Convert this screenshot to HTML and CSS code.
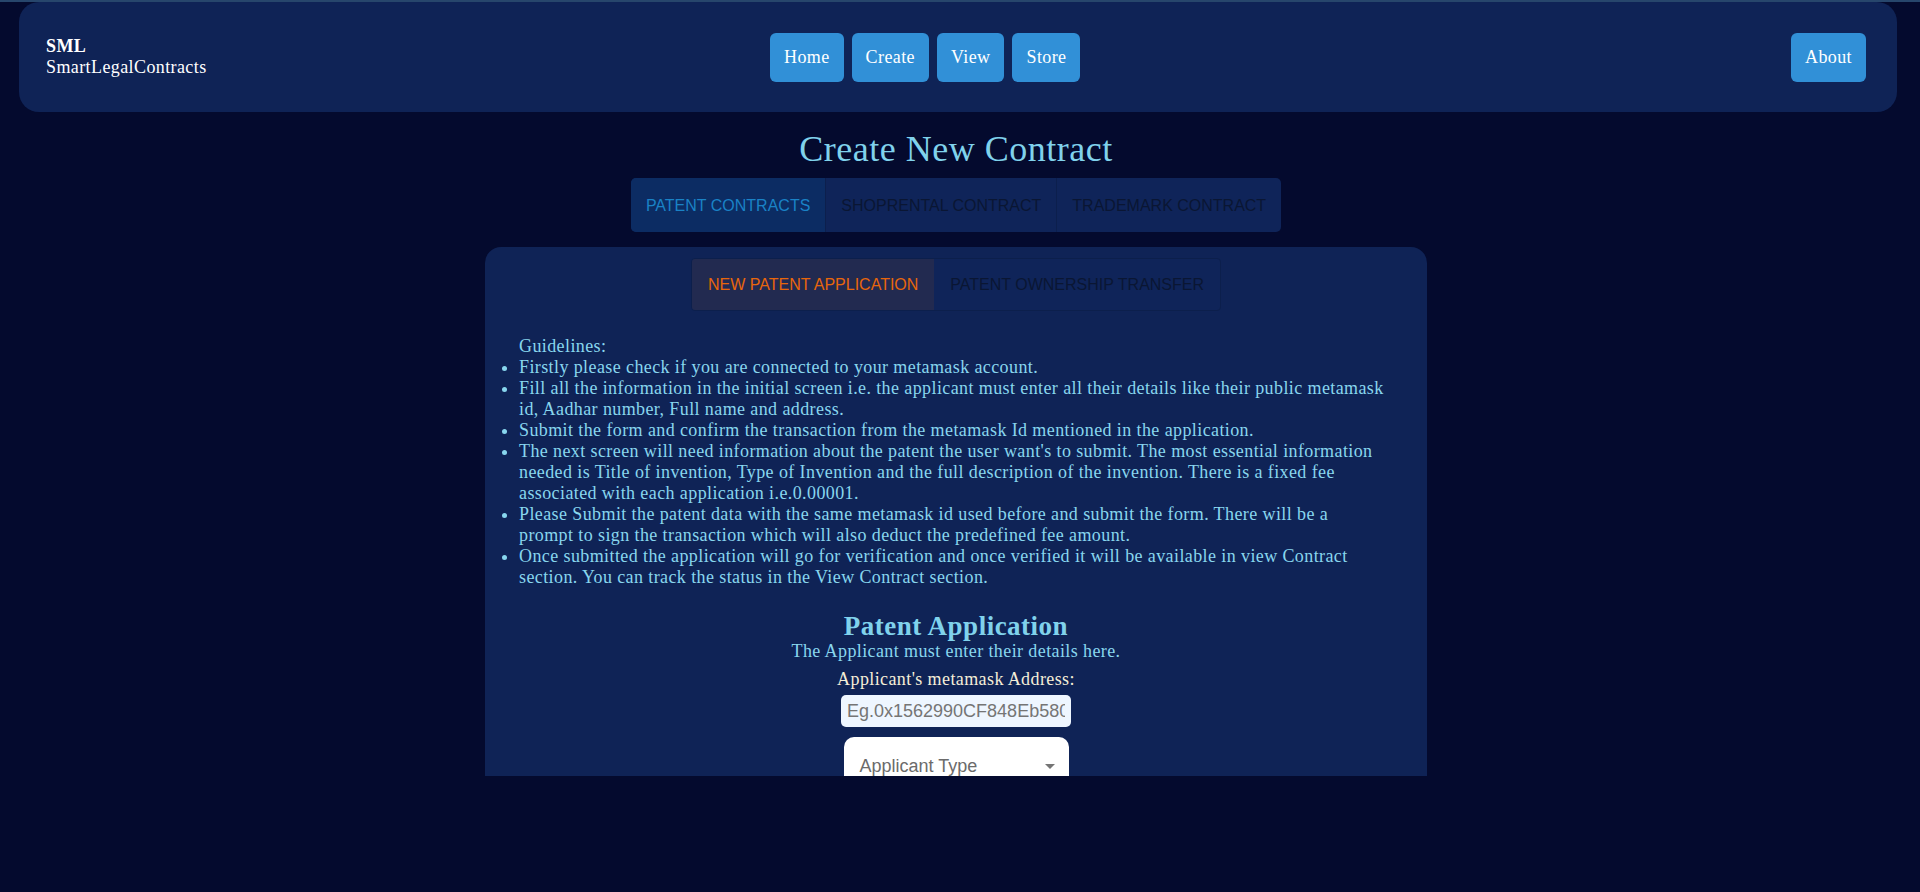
FILE: index.html
```html
<!DOCTYPE html>
<html lang="en">
<head>
<meta charset="utf-8">
<title>SmartLegalContracts - Create</title>
<link rel="stylesheet" href="styles.css">
</head>
<body>
<header class="navbar">
  <div class="brand"><b>SML</b><span>SmartLegalContracts</span></div>
  <nav class="nav-links">
    <a class="btn">Home</a>
    <a class="btn">Create</a>
    <a class="btn">View</a>
    <a class="btn">Store</a>
  </nav>
  <div class="spacer"></div>
  <a class="btn">About</a>
</header>
<main class="main">
  <h1 class="title">Create New Contract</h1>
  <div class="tabs">
    <div class="tab active">Patent Contracts</div>
    <div class="tab">Shoprental Contract</div>
    <div class="tab">Trademark Contract</div>
  </div>
  <section class="card">
    <div class="subtabs">
      <div class="subtab active">New Patent Application</div>
      <div class="subtab">Patent Ownership Transfer</div>
    </div>
    <div class="guidelines">
      <p class="gl-title">Guidelines:</p>
      <ul class="gl-list">
        <li>Firstly please check if you are connected to your metamask account.</li>
        <li>Fill all the information in the initial screen i.e. the applicant must enter all their details like their public metamask id, Aadhar number, Full name and address.</li>
        <li>Submit the form and confirm the transaction from the metamask Id mentioned in the application.</li>
        <li>The next screen will need information about the patent the user want's to submit. The most essential information needed is Title of invention, Type of Invention and the full description of the invention. There is a fixed fee associated with each application i.e.0.00001.</li>
        <li>Please Submit the patent data with the same metamask id used before and submit the form. There will be a prompt to sign the transaction which will also deduct the predefined fee amount.</li>
        <li>Once submitted the application will go for verification and once verified it will be available in view Contract section. You can track the status in the View Contract section.</li>
      </ul>
    </div>
    <form class="form">
      <h2 class="form-title">Patent Application</h2>
      <p class="form-sub">The Applicant must enter their details here.</p>
      <label class="form-label" for="addr">Applicant's metamask Address:</label>
      <input id="addr" class="form-input" type="text" placeholder="Eg.0x1562990CF848Eb580000000000000">
      <div class="select">
        <span class="select-label">Applicant Type</span>
        <svg class="select-arrow" viewBox="0 0 24 24" width="24" height="24"><path d="M7 10l5 5 5-5z" fill="#757575"/></svg>
      </div>
    </form>
  </section>
</main>
</body>
</html>
```

FILE: styles.css
```css
html, body {
  margin: 0;
  padding: 0;
}

body {
  background: #040a2e;
  border-top: 2px solid #27466c;
  font-family: "Liberation Serif", "Times New Roman", serif;
  font-size: 18px;
  line-height: 21px;
  letter-spacing: 0.4px;
  color: #88d6ee;
  min-height: 890px;
}

.navbar {
  margin: 0 23px 0 19px;
  height: 110px;
  background: #0f2356;
  border-radius: 20px;
  display: grid;
  grid-template-columns: 724px auto 1fr auto;
  align-items: center;
  padding: 0 31px 0 27px;
}

.brand {
  display: flex;
  flex-direction: column;
  color: #ffffff;
}

.brand b {
  font-weight: 700;
}

.nav-links {
  display: flex;
  gap: 8px;
}

.btn {
  background: #3190d7;
  color: #ffffff;
  height: 49px;
  padding: 0 14px;
  border-radius: 6px;
  display: flex;
  align-items: center;
  cursor: pointer;
}

.main {
  display: flex;
  flex-direction: column;
  align-items: center;
  padding-right: 8px;
}

.title {
  margin: 17px 0 9px;
  font-size: 36px;
  line-height: 40px;
  font-weight: 400;
  letter-spacing: 0.5px;
  color: #80d2ec;
}

.tabs {
  display: flex;
  height: 54px;
  flex-shrink: 0;
  background: #0f2459;
  border-radius: 5px;
  overflow: hidden;
}

.tab {
  display: flex;
  align-items: center;
  padding: 0 15px;
  font-family: "Liberation Sans", Arial, sans-serif;
  font-size: 16px;
  letter-spacing: 0;
  text-transform: uppercase;
  color: #0a1633;
  border-left: 1px solid #0c1f4d;
}

.tab:first-child {
  border-left: none;
}

.tab.active {
  background: #0c2c63;
  color: #1a82c6;
}

.card {
  margin-top: 15px;
  width: 942px;
  height: 529px;
  box-sizing: border-box;
  overflow: hidden;
  background: #0f2356;
  border-radius: 16px 16px 0 0;
  padding-top: 11px;
  display: flex;
  flex-direction: column;
  align-items: center;
}

.card > * {
  flex-shrink: 0;
}

.subtabs {
  display: flex;
  height: 53px;
  box-sizing: border-box;
  background: #0f2459;
  border: 1px solid #0c1f4c;
  border-radius: 4px;
  overflow: hidden;
}

.subtab {
  display: flex;
  align-items: center;
  padding: 0 16px;
  font-family: "Liberation Sans", Arial, sans-serif;
  font-size: 16px;
  letter-spacing: 0;
  text-transform: uppercase;
  color: #0a1633;
}

.subtab.active {
  background: #222a50;
  color: #e8660c;
}

.guidelines {
  align-self: stretch;
  padding: 0 40px 0 34px;
  margin-top: 25px;
}

.gl-title {
  margin: 0;
}

.gl-list {
  margin: 0;
  padding: 0;
}

.gl-list li {
  margin: 0;
}

.form {
  margin-top: 23px;
  display: flex;
  flex-direction: column;
  align-items: center;
}

.form > * {
  flex-shrink: 0;
}

.form-title {
  margin: 0;
  font-size: 27px;
  line-height: 30px;
  font-weight: 700;
  letter-spacing: 0.5px;
  color: #80d2ec;
}

.form-sub {
  margin: 0;
}

.form-label {
  margin-top: 7px;
  color: #f5eed8;
}

.form-input {
  margin-top: 5px;
  width: 230px;
  height: 32px;
  box-sizing: border-box;
  border: none;
  border-radius: 5px;
  background: #eef6ff;
  padding: 0 6px;
  font-family: "Liberation Sans", Arial, sans-serif;
  font-size: 18px;
  color: #333333;
  outline: none;
}

.form-input::placeholder {
  color: #757575;
}

.select {
  margin-top: 10px;
  width: 225px;
  height: 56px;
  box-sizing: border-box;
  background: #ffffff;
  border-radius: 10px;
  display: flex;
  align-items: center;
  justify-content: space-between;
  padding: 2px 7px 0 16px;
  font-family: "Liberation Sans", Arial, sans-serif;
  font-size: 18px;
  letter-spacing: 0;
  color: #6b6b6b;
}

.select-arrow {
  display: block;
}
```
